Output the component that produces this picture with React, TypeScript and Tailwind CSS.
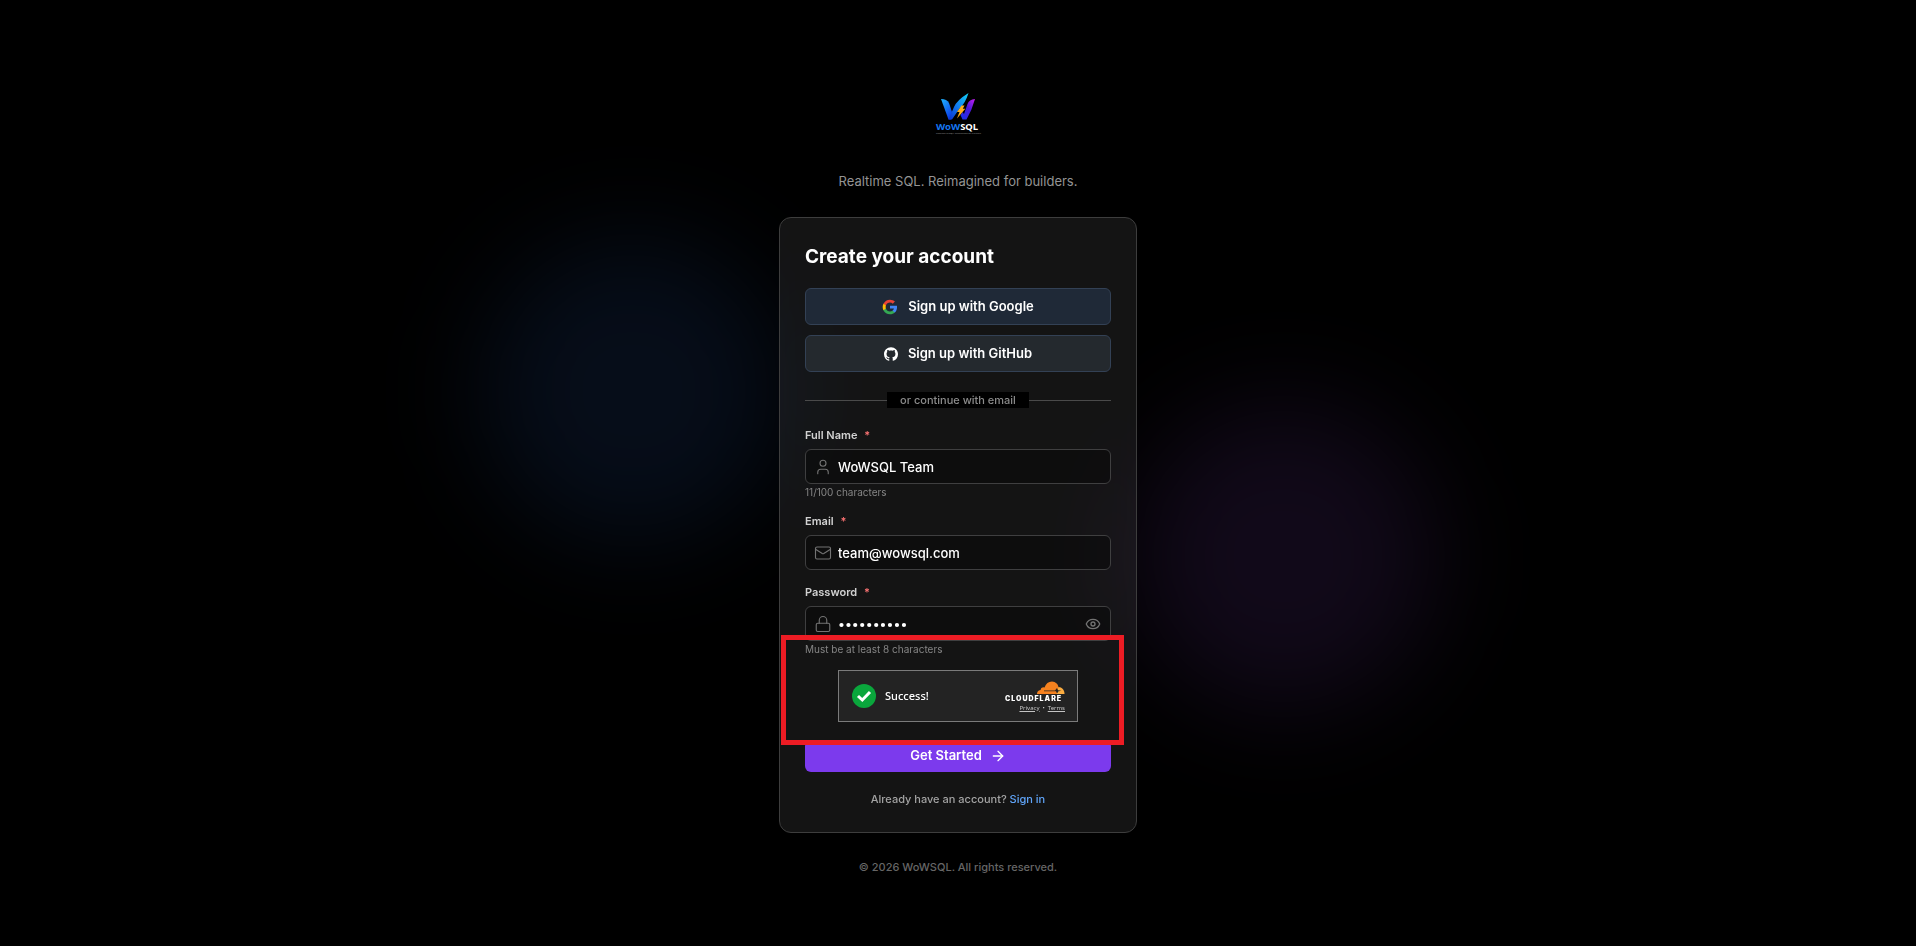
import React, { useState } from 'react';
import { ArrowRight, Eye, Lock, Mail, User } from 'lucide-react';
import { SiGithub } from 'react-icons/si';

interface FieldProps {
  id: string;
  label: string;
  type: string;
  value: string;
  onChange: (value: string) => void;
  icon: React.ReactNode;
  hint?: string;
  action?: React.ReactNode;
}

const Field: React.FC<FieldProps> = ({ id, label, type, value, onChange, icon, hint, action }) => (
  <div>
    <label htmlFor={id} className="block text-[11px] leading-4 font-semibold text-[#d1d1d1]">
      {label} <span className="ml-1 text-[#f87171]">*</span>
    </label>
    <div className="relative mt-1.5">
      <span className="absolute inset-y-0 left-[9px] flex items-center text-[#737373]">{icon}</span>
      <input
        id={id}
        type={type}
        value={value}
        onChange={(e) => onChange(e.target.value)}
        className="block h-[35px] w-full rounded-md border border-[#3f3f40] bg-black/30 pr-8 pl-8 text-[13px] font-medium text-white outline-none focus:border-[#7c3aed]"
      />
      {action}
    </div>
    {hint && <p className="mt-0.5 text-[10px] leading-[13px] text-[#858585]">{hint}</p>}
  </div>
);

const Logo: React.FC = () => (
  <svg viewBox="0 0 80 80" className="h-20 w-20" role="img" aria-label="WoWSQL">
    <defs>
      <linearGradient id="left" x1="0" y1="0" x2="0.6" y2="1">
        <stop offset="0" stopColor="#1fb4ff" />
        <stop offset="1" stopColor="#0b3fe8" />
      </linearGradient>
      <linearGradient id="mid" x1="1" y1="0" x2="0" y2="1">
        <stop offset="0" stopColor="#12d2f5" />
        <stop offset="0.5" stopColor="#1280f0" />
        <stop offset="1" stopColor="#0a2fd0" />
      </linearGradient>
      <linearGradient id="right" x1="1" y1="0" x2="0.2" y2="1">
        <stop offset="0" stopColor="#c81cf0" />
        <stop offset="0.5" stopColor="#4a1ad8" />
        <stop offset="1" stopColor="#1d2fe6" />
      </linearGradient>
    </defs>
    <path d="M23 28Q29 28 31 32L34 41L33 48.500H30.500Z" fill="url(#left)" />
    <path d="M50.500 22Q47 33 41.500 37.500L34 48.500H30.500L36 36Q39 29 50.500 22Z" fill="url(#mid)" />
    <path d="M57 28Q51 28.500 49.500 33L46 43L44.500 41L42.500 44L44.500 48.500H48.500Q54 39 57 28Z" fill="url(#right)" />
    <path d="M43.500 34.500H46.500L44.800 37.800H47.300L39 47.500L41.500 41H39Z" fill="#ffae1a" />
    <text x="18" y="58.500" fontFamily="Noto Sans, sans-serif" fontSize="9.500" fontWeight="700">
      <tspan fill="#1677f2">WoW</tspan>
      <tspan fill="#ffffff">SQL</tspan>
    </text>
    <text x="18" y="63" fontFamily="Noto Sans, sans-serif" fontSize="2.300" fill="#8a8a8a">
      Realtime MySQL. Reimagined for builders.
    </text>
  </svg>
);

const GoogleIcon: React.FC = () => (
  <svg viewBox="0 0 24 24" className="h-4 w-4" aria-hidden="true">
    <path fill="#4285F4" d="M22.560 12.250c0-.78-.07-1.530-.2-2.250H12v4.260h5.920c-.26 1.370-1.040 2.530-2.210 3.310v2.770h3.570c2.080-1.920 3.280-4.740 3.280-8.090z" />
    <path fill="#34A853" d="M12 23c2.970 0 5.460-.98 7.280-2.660l-3.570-2.770c-.98.66-2.230 1.060-3.710 1.060-2.860 0-5.290-1.930-6.160-4.530H2.180v2.840C3.990 20.530 7.700 23 12 23z" />
    <path fill="#FBBC05" d="M5.840 14.090c-.22-.66-.35-1.360-.35-2.090s.13-1.430.35-2.090V7.070H2.180C1.430 8.550 1 10.220 1 12s.43 3.450 1.180 4.930l3.660-2.840z" />
    <path fill="#EA4335" d="M12 5.380c1.620 0 3.060.56 4.210 1.640l3.150-3.150C17.450 2.090 14.970 1 12 1 7.700 1 3.990 3.470 2.180 7.070l3.660 2.840c.87-2.600 3.300-4.530 6.160-4.530z" />
  </svg>
);

const CloudflareMark: React.FC = () => (
  <svg viewBox="0 0 60 22" className="h-[22px] w-[60px]" role="img" aria-label="Cloudflare">
    <path d="M51 14L52 9L53.500 7C57 7 59.500 10 59.500 14Z" fill="#fbad41" />
    <path d="M32 14Q32 10.500 35.500 10Q36 6.500 39.500 7.500Q41.500 1.500 47 1.500Q52.500 2 53.500 7L51.500 14Z" fill="#f6821f" />
    <path d="M39 10.500H50L52 8L53 10.300L56.500 10.800L53.500 11.300L52 13.500L51 11.300H39Z" fill="#232323" />
    <text x="0" y="21" fontFamily="Inter, sans-serif" fontSize="7" fontWeight="900" fill="#ffffff" letterSpacing="1">
      CLOUDFLARE
    </text>
  </svg>
);

const Turnstile: React.FC = () => (
  <div className="mx-auto flex h-[52px] w-60 items-center border border-[#7b7b7b] bg-[#232323] pr-3 pl-[13px]">
    <svg viewBox="0 0 24 24" className="h-6 w-6" aria-hidden="true">
      <circle cx="12" cy="12" r="12" fill="#0aa63c" />
      <path d="M6 12L10.300 16L18 8" fill="none" stroke="#ffffff" strokeWidth="3" />
    </svg>
    <span className="ml-[9px] font-['Noto_Sans',sans-serif] text-[11px] font-medium text-white">Success!</span>
    <div className="ml-auto flex flex-col items-end">
      <CloudflareMark />
      <div className="mt-0.5 flex gap-[3px] font-['Noto_Sans',sans-serif] text-[6px] leading-[9px] text-[#c4c4c4]">
        <a href="#privacy" className="underline">Privacy</a>
        <span>•</span>
        <a href="#terms" className="underline">Terms</a>
      </div>
    </div>
  </div>
);

const App: React.FC = () => {
  const [fullName, setFullName] = useState('WoWSQL Team');
  const [email, setEmail] = useState('team@wowsql.com');
  const [password, setPassword] = useState('wowsql2026');
  const [showPassword, setShowPassword] = useState(false);

  return (
    <div className="relative flex min-h-screen flex-col items-center justify-center overflow-hidden bg-black font-['Inter',sans-serif]">
      {/* Background glows */}
      <div className="absolute top-1/4 left-1/4 h-[307px] w-[307px] rounded-full bg-[#3b82f6]/10 blur-[51px]" />
      <div className="absolute right-1/4 bottom-1/4 h-[307px] w-[307px] rounded-full bg-[#a855f7]/10 blur-[51px]" />

      <div className="relative flex w-full max-w-[358px] flex-col">
        <div className="flex justify-center">
          <Logo />
        </div>
        <p className="mt-5 text-center text-[13px] leading-5 text-[#949494]">Realtime SQL. Reimagined for builders.</p>

        {/* Sign up card */}
        <div className="relative mt-[26px] rounded-xl border border-[#3d3d3d] bg-white/8 p-[25px] backdrop-blur-xl">
          <h1 className="text-[19px] leading-7 font-bold text-white">Create your account</h1>

          <div className="mt-[17px] flex flex-col gap-2.5">
            <button
              type="button"
              className="flex h-[37px] items-center justify-center gap-2.5 rounded-md border border-[#334155] bg-[#1f2937] text-[13px] font-semibold text-white"
            >
              <GoogleIcon />
              Sign up with Google
            </button>
            <button
              type="button"
              className="flex h-[37px] items-center justify-center gap-2.5 rounded-md border border-[#334155] bg-[#24292e] text-[13px] font-semibold text-white"
            >
              <SiGithub className="h-3.5 w-3.5" />
              Sign up with GitHub
            </button>
          </div>

          <div className="mt-5 flex items-center">
            <span className="h-px flex-1 bg-[#4a4a4a]" />
            <span className="bg-black px-[13px] text-[11px] leading-4 font-medium text-[#8c8c8c]">or continue with email</span>
            <span className="h-px flex-1 bg-[#4a4a4a]" />
          </div>

          <form className="mt-[19px] flex flex-col gap-3.5" onSubmit={(e) => e.preventDefault()}>
            <Field
              id="fullName"
              label="Full Name"
              type="text"
              value={fullName}
              onChange={setFullName}
              icon={<User className="h-[18px] w-[18px]" strokeWidth={1.5} />}
              hint={`${fullName.length}/100 characters`}
            />
            <Field
              id="email"
              label="Email"
              type="email"
              value={email}
              onChange={setEmail}
              icon={<Mail className="h-[18px] w-[18px]" strokeWidth={1.5} />}
            />
            <Field
              id="password"
              label="Password"
              type={showPassword ? 'text' : 'password'}
              value={password}
              onChange={setPassword}
              icon={<Lock className="h-[18px] w-[18px]" strokeWidth={1.5} />}
              hint="Must be at least 8 characters"
              action={
                <button
                  type="button"
                  aria-label="Show password"
                  onClick={() => setShowPassword(!showPassword)}
                  className="absolute inset-y-0 right-2.5 flex items-center text-[#737373]"
                >
                  <Eye className="h-4 w-4" strokeWidth={2} />
                </button>
              }
            />
            <Turnstile />
            <button
              type="submit"
              className="mt-1 flex h-8 items-center justify-center gap-2 rounded-md bg-[#7c3aed] text-[13px] font-semibold text-white"
            >
              Get Started
              <ArrowRight className="h-4 w-4" />
            </button>
          </form>

          <p className="mt-[19px] text-center text-[11px] leading-4 font-medium text-[#a3a3a3]">
            Already have an account? <a href="#signin" className="text-[#60a5fa]">Sign in</a>
          </p>

          {/* Highlight around the verification step */}
          <div className="pointer-events-none absolute top-[417px] right-3 left-px h-[110px] border-[5px] border-[#ed1c24]" />
        </div>

        <p className="mt-[26px] text-center text-[11px] leading-4 font-medium text-[#666666]">© 2026 WoWSQL. All rights reserved.</p>
      </div>
    </div>
  );
};

export default App;
